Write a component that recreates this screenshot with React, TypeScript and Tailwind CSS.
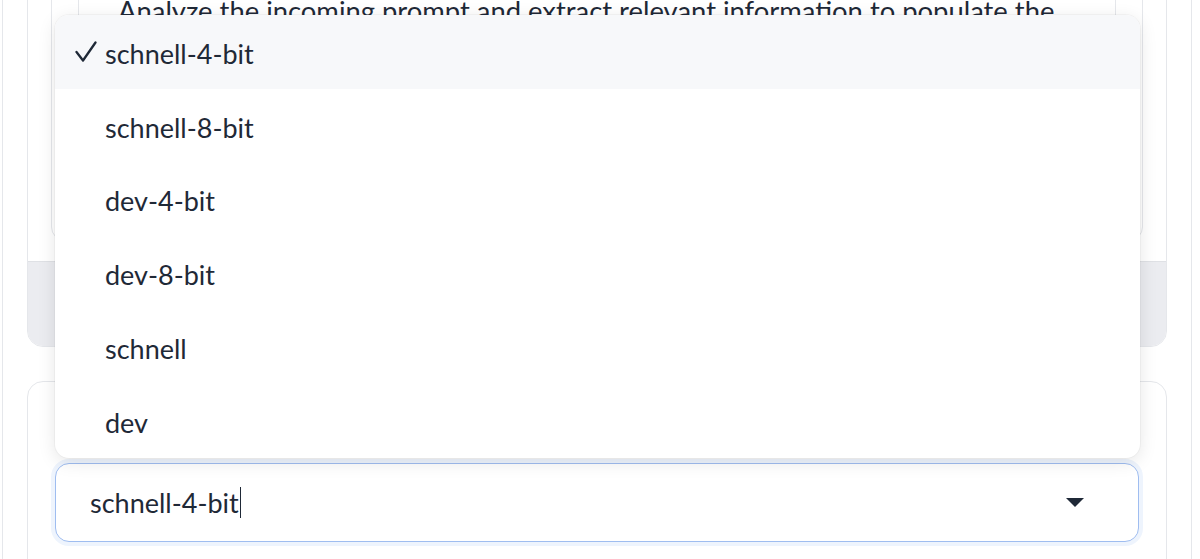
import React from "react";

const items = ["schnell-4-bit", "schnell-8-bit", "dev-4-bit", "dev-8-bit", "schnell", "dev"];

export default function App() {
  return (
    <div
      className="relative w-[1200px] h-[559px] overflow-hidden bg-white text-[#1f2937]"
      style={{ fontFamily: "Lato, 'Noto Sans', sans-serif" }}
    >
      <div className="ml-[2px] w-[1190px] h-[700px] border-x border-[#e5e7eb] px-[24px] flex flex-col">
        {/* Card 1 */}
        <div className="-mt-[60px] border border-[#e5e7eb] rounded-b-[16px] overflow-hidden">
          <div className="px-[23px] pb-[20px] bg-white">
            <div className="border border-[#e5e7eb] rounded-[14px] px-[26px] h-[300px] flex flex-col justify-end pb-[40px] pt-0">
              <div className="border-x border-[#e5e7eb] h-[260px] pl-[39px] pt-[53px] text-[27.4px] leading-[32px] whitespace-nowrap overflow-hidden">
                Analyze the incoming prompt and extract relevant information to populate the
              </div>
            </div>
          </div>
          <div className="h-[85px] bg-[#ebecf0] border-t border-[#dfe1e5]" />
        </div>
        {/* Card 2 */}
        <div className="mt-[34px] border border-[#e5e7eb] rounded-t-[16px] h-[300px] px-[27px] pt-[81px]">
          <div className="h-[79px] rounded-[14px] border border-[#9fbdf0] bg-white shadow-[0_0_0_4px_#eef4fd] flex items-center pl-[34px] pr-[54px]">
            <span className="text-[27px] leading-none">schnell-4-bit</span>
            <span className="w-[1px] h-[31px] bg-[#1f2937] ml-[1px]" />
            <span className="flex-1" />
            <svg width="18" height="10" viewBox="0 0 18 10">
              <path d="M0 0 L18 0 L9 9 Z" fill="#1f2937" />
            </svg>
          </div>
        </div>
      </div>

      {/* Dropdown */}
      <div className="absolute left-[55px] top-[15px] w-[1085px] h-[443px] bg-white rounded-[14px] shadow-[0_4px_18px_rgba(0,0,0,0.10),0_0_0_1px_rgba(0,0,0,0.03)] overflow-hidden">
        {items.map((it, i) => (
          <div
            key={it}
            className={`h-[73.8px] flex items-center pt-[3px] text-[27px] leading-none ${i === 0 ? "bg-[#f7f8fa]" : ""}`}
          >
            <span className="w-[50px] pl-[20px] flex items-center">
              {i === 0 ? (
                <svg width="22" height="22" viewBox="0 0 22 22" className="-mt-[2px]">
                  <path d="M1.5 11 L8 19.5 L20.5 1.5" fill="none" stroke="#1f2937" strokeWidth="2.3" strokeLinecap="round" strokeLinejoin="round" />
                </svg>
              ) : null}
            </span>
            <span>{it}</span>
          </div>
        ))}
      </div>
    </div>
  );
}
